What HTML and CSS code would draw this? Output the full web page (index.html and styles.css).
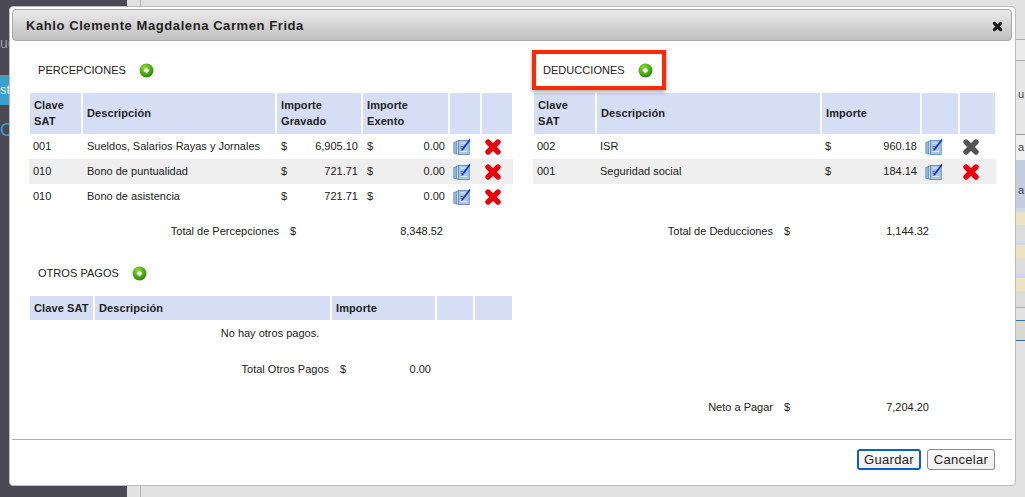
FILE: index.html
```html
<!DOCTYPE html>
<html lang="es">
<head>
<meta charset="utf-8">
<title>Nómina</title>
<link rel="stylesheet" href="styles.css">
</head>
<body>
<svg class="defs" width="0" height="0" aria-hidden="true">
  <defs>
    <radialGradient id="plusFill" cx="40%" cy="30%" r="75%">
      <stop offset="0" stop-color="#8fdc3a"/>
      <stop offset="0.6" stop-color="#4aa80f"/>
      <stop offset="1" stop-color="#2c7f08"/>
    </radialGradient>
    <symbol id="plus" viewBox="0 0 16 16">
      <circle cx="8" cy="8" r="7.4" fill="url(#plusFill)"/>
      <path d="M8 5.2v5.6M5.2 8h5.6" stroke="#fff" stroke-width="2"/>
    </symbol>
    <symbol id="edit" viewBox="0 0 18 18">
      <path d="M.8 4.5 4 3.6v12.6l-3.2-1z" fill="#9dbcdc" stroke="#5a8cc0" stroke-width=".8"/>
      <path d="M3.4 3.4 6.2 2.6v13.8l-2.8-.6z" fill="#c2d7ea" stroke="#5a8cc0" stroke-width=".8"/>
      <rect x="5.6" y="2.6" width="10.6" height="14" fill="#a9c5e0" stroke="#5a8cc0" stroke-width=".9"/>
      <path d="M7.4 5h6M7.4 13.5h7" stroke="#e6eff7" stroke-width="1"/>
      <path d="M8.4 11.2 16.4.9l1.3 1L9.8 12.4z" fill="#1330d8"/>
      <path d="M8.4 11.2 7.8 13l2-.6z" fill="#a8642c"/>
      <path d="M7.5 8.5h3M7.5 10.5h1.5" stroke="#54687e" stroke-width="1"/>
    </symbol>
    <symbol id="del" viewBox="0 0 18 18">
      <path d="M4 4 14 14M14 4 4 14" stroke="currentColor" stroke-width="5.4" stroke-linecap="round"/>
    </symbol>
  </defs>
</svg>

<div class="page">
  <aside class="sidebar">
    <div class="side-text">uc</div>
    <div class="side-button">st</div>
    <div class="side-link">Cc</div>
  </aside>
  <main class="backdrop">
    <div class="back-inner">
      <div class="strip">
        <div class="strip-row strip-top"></div>
        <div class="strip-row strip-head"></div>
        <div class="strip-row strip-text">u</div>
        <div class="strip-row strip-name">a</div>
        <div class="strip-row strip-blue">a</div>
        <div class="strip-row strip-thumb"></div>
        <div class="strip-row strip-thumb"></div>
        <div class="strip-row strip-thumb"></div>
        <div class="strip-row strip-foot"></div>
        <div class="strip-row strip-pager"></div>
      </div>
    </div>
  </main>
</div>

<section class="modal">
  <header class="titlebar">
    <h1 class="title">Kahlo Clemente Magdalena Carmen Frida</h1>
    <svg class="close"><use href="#del"/></svg>
  </header>

  <div class="modal-body">
    <div class="column">
      <h2 class="heading">PERCEPCIONES <svg class="plus"><use href="#plus"/></svg></h2>
      <table class="grid">
        <thead>
          <tr>
            <th class="p1">Clave SAT</th>
            <th class="p2">Descripción</th>
            <th class="p3">Importe Gravado</th>
            <th class="p4">Importe Exento</th>
            <th class="p5"></th>
            <th class="p6"></th>
          </tr>
        </thead>
        <tbody>
          <tr>
            <td>001</td>
            <td>Sueldos, Salarios Rayas y Jornales</td>
            <td><div class="money"><span>$</span><span>6,905.10</span></div></td>
            <td><div class="money"><span>$</span><span>0.00</span></div></td>
            <td class="icon"><svg class="edit"><use href="#edit"/></svg></td>
            <td class="icon"><svg class="del"><use href="#del"/></svg></td>
          </tr>
          <tr class="alt">
            <td>010</td>
            <td>Bono de puntualidad</td>
            <td><div class="money"><span>$</span><span>721.71</span></div></td>
            <td><div class="money"><span>$</span><span>0.00</span></div></td>
            <td class="icon"><svg class="edit"><use href="#edit"/></svg></td>
            <td class="icon"><svg class="del"><use href="#del"/></svg></td>
          </tr>
          <tr>
            <td>010</td>
            <td>Bono de asistencia</td>
            <td><div class="money"><span>$</span><span>721.71</span></div></td>
            <td><div class="money"><span>$</span><span>0.00</span></div></td>
            <td class="icon"><svg class="edit"><use href="#edit"/></svg></td>
            <td class="icon"><svg class="del"><use href="#del"/></svg></td>
          </tr>
        </tbody>
      </table>
      <div class="total total-per">
        <span class="total-label">Total de Percepciones</span>
        <span class="total-sign">$</span>
        <span class="total-amount">8,348.52</span>
      </div>

      <h2 class="heading heading-otros">OTROS PAGOS <svg class="plus"><use href="#plus"/></svg></h2>
      <table class="grid grid-otros">
        <thead>
          <tr>
            <th class="o1">Clave SAT</th>
            <th class="o2">Descripción</th>
            <th class="o3">Importe</th>
            <th class="o4"></th>
            <th class="o5"></th>
          </tr>
        </thead>
        <tbody>
          <tr>
            <td class="empty" colspan="5">No hay otros pagos.</td>
          </tr>
        </tbody>
      </table>
      <div class="total total-otros">
        <span class="total-label">Total Otros Pagos</span>
        <span class="total-sign">$</span>
        <span class="total-amount">0.00</span>
      </div>
    </div>

    <div class="column">
      <h2 class="heading heading-ded">DEDUCCIONES <svg class="plus"><use href="#plus"/></svg></h2>
      <table class="grid grid-ded">
        <thead>
          <tr>
            <th class="d1">Clave SAT</th>
            <th class="d2">Descripción</th>
            <th class="d3">Importe</th>
            <th class="d4"></th>
            <th class="d5"></th>
          </tr>
        </thead>
        <tbody>
          <tr>
            <td>002</td>
            <td>ISR</td>
            <td><div class="money"><span>$</span><span>960.18</span></div></td>
            <td class="icon"><svg class="edit"><use href="#edit"/></svg></td>
            <td class="icon"><svg class="del del-off"><use href="#del"/></svg></td>
          </tr>
          <tr class="alt">
            <td>001</td>
            <td>Seguridad social</td>
            <td><div class="money"><span>$</span><span>184.14</span></div></td>
            <td class="icon"><svg class="edit"><use href="#edit"/></svg></td>
            <td class="icon"><svg class="del"><use href="#del"/></svg></td>
          </tr>
        </tbody>
      </table>
      <div class="total total-ded">
        <span class="total-label">Total de Deducciones</span>
        <span class="total-sign">$</span>
        <span class="total-amount">1,144.32</span>
      </div>
      <div class="total total-neto">
        <span class="total-label">Neto a Pagar</span>
        <span class="total-sign">$</span>
        <span class="total-amount">7,204.20</span>
      </div>
    </div>
  </div>

  <footer class="modal-foot">
    <button class="btn btn-primary" type="button">Guardar</button>
    <button class="btn" type="button">Cancelar</button>
  </footer>

  <div class="callout"></div>
</section>
</body>
</html>
```

FILE: styles.css
```css
* { box-sizing: border-box; }

html, body {
  margin: 0;
  height: 497px;
  overflow: hidden;
}

body {
  position: relative;
  font-family: "Liberation Sans", Arial, sans-serif;
  font-size: 11px;
  color: #222;
  background: #e0e0e0;
}

.defs { position: absolute; }

/* Page behind the dialog */
.page {
  display: flex;
  height: 497px;
}

.sidebar {
  width: 127px;
  flex: none;
  background: #4a4954;
  padding-top: 35px;
  overflow: hidden;
}

.side-text {
  font-size: 14px;
  line-height: 16px;
  color: #9a9aa6;
}

.side-button {
  margin-top: 24px;
  height: 30px;
  width: 60px;
  background: #3a9fd0;
  color: #e8f4fa;
  font-size: 13px;
  line-height: 30px;
}

.side-link {
  margin-top: 14px;
  font-size: 18px;
  line-height: 22px;
  color: #3a9fd0;
}

.backdrop {
  flex: 1;
  min-width: 0;
  background: #e2e2e2;
  padding-left: 13px;
}

.back-inner {
  height: 100%;
  border-left: 1px solid #b4b4b4;
  display: flex;
  justify-content: flex-end;
}

.strip {
  width: 9px;
  overflow: hidden;
  font-size: 11px;
  color: #444;
}

.strip-row {
  white-space: nowrap;
  overflow: hidden;
  padding-left: 2px;
}

.strip-top { height: 39px; }
.strip-head { height: 22px; border-top: 1px solid #aaa; border-bottom: 1px solid #aaa; background: #ececec; }
.strip-text { height: 74px; line-height: 66px; background: #e6e6e6; border-bottom: 1px solid #999; }
.strip-name { height: 25px; line-height: 24px; background: #f0f0f0; }
.strip-blue { height: 48px; line-height: 60px; background: #c5cde0; }
.strip-thumb {
  height: 33px;
  background: linear-gradient(#cdd8ea 0 4px, #ece3bf 4px 17px, #dcdcdc 17px);
}
.strip-foot { height: 13px; background: #e2e2e2; border-top: 1px solid #aaa; }
.strip-pager { height: 21px; background: #d8d8d0; border-top: 1px solid #3a6ea5; border-bottom: 1px solid #3a6ea5; }

/* Dialog */
.modal {
  position: absolute;
  left: 9px;
  top: 6px;
  width: 1007px;
  height: 480px;
  padding: 3px 3px 3px 2px;
  display: flex;
  flex-direction: column;
  background: #fff;
  border: 1px solid #bbb;
  border-radius: 4px;
}

.titlebar {
  flex: none;
  height: 32px;
  margin-top: -1px;
  display: flex;
  align-items: center;
  justify-content: space-between;
  padding: 0 8px 0 13px;
  background: linear-gradient(#ebebeb, #bfbfbf);
  border: 1px solid #a8a8a8;
  border-radius: 4px;
}

.title {
  margin: 0;
  font-size: 13px;
  font-weight: bold;
  letter-spacing: .58px;
  color: #222;
}

.close {
  display: block;
  width: 11px;
  height: 11px;
  margin-top: 3px;
  color: #1a1a1a;
}

.modal-body {
  flex: 1;
  min-height: 0;
  display: grid;
  grid-template-columns: 484px 463px;
  column-gap: 20px;
  padding-left: 17px;
}

.heading {
  display: flex;
  align-items: center;
  height: 24px;
  margin: 17px 0 10px;
  padding-left: 9px;
  font-size: 11px;
  font-weight: normal;
  letter-spacing: .04px;
  color: #222;
  white-space: pre;
}

.heading-otros { margin: 22px 0 10px; }
.heading-ded { padding-left: 10px; }

.plus {
  width: 15px;
  height: 15px;
  margin-left: 10px;
}

/* Tables */
.grid {
  width: 484px;
  table-layout: fixed;
  border-collapse: separate;
  border-spacing: 0;
}

.grid-ded { width: 463px; }

.grid th {
  height: 42px;
  padding: 0 3px 2px 4px;
  border: 1px solid #fff;
  border-bottom-width: 0;
  background: #d5def5;
  background-clip: padding-box;
  font-size: 11px;
  line-height: 16px;
  letter-spacing: .1px;
  font-weight: bold;
  text-align: left;
  vertical-align: middle;
}

.grid-otros th {
  height: 25px;
  padding-bottom: 0;
  white-space: nowrap;
}

.grid td {
  height: 25px;
  padding: 0 5px 2px;
  line-height: 14px;
  white-space: nowrap;
  vertical-align: middle;
}

.grid td:first-child { padding-left: 4px; }
.grid-ded td { padding-left: 4px; }
.grid .alt td { background: #efefef; }
.grid td.icon { padding: 0; text-align: left; }
.grid td.empty { text-align: center; height: 26px; padding: 0 2px 0 0; }

.p1 { width: 53px; }
.p2 { width: 194px; }
.p3 { width: 86px; }
.p4 { width: 87px; }
.p5 { width: 32px; }
.p6 { width: 32px; }

.o1 { width: 65px; }
.o2 { width: 237px; }
.o3 { width: 105px; }
.o4 { width: 38px; }
.o5 { width: 39px; }

.d1 { width: 63px; }
.d2 { width: 225px; }
.d3 { width: 100px; }
.d4 { width: 38px; }
.d5 { width: 37px; }

.money {
  display: flex;
  justify-content: space-between;
}

.money span:last-child { margin-right: -1px; }

.edit {
  display: block;
  width: 18px;
  height: 18px;
  margin-left: 4px;
}

.del {
  display: block;
  width: 18px;
  height: 18px;
  margin-left: 3px;
  color: #e8000c;
}

.del-off { color: #555; }

/* Totals */
.total {
  display: flex;
  height: 16px;
  line-height: 16px;
}

.total-label { text-align: right; white-space: nowrap; }
.total-sign { margin-left: 11px; width: 8px; flex: none; }
.total-amount { text-align: right; flex: none; }

.total-per { margin-top: 14px; }
.total-per .total-label { width: 250px; }
.total-per .total-amount { width: 145px; }

.total-otros { margin-top: 15px; }
.total-otros .total-label { width: 300px; }
.total-otros .total-amount { width: 83px; }

.total-ded { margin-top: 39px; }
.total-ded .total-label { width: 240px; }
.total-ded .total-amount { width: 137px; }

.total-neto { margin-top: 160px; }
.total-neto .total-label { width: 240px; }
.total-neto .total-amount { width: 137px; }

/* Footer */
.modal-foot {
  flex: none;
  height: 43px;
  border-top: 1px solid #b0b0b0;
  display: flex;
  justify-content: flex-end;
  align-items: flex-start;
  gap: 6px;
  padding: 9px 17px 0 0;
}

.btn {
  height: 21px;
  width: 68px;
  padding: 0;
  font-family: inherit;
  font-size: 13px;
  letter-spacing: .3px;
  color: #222;
  background: linear-gradient(#fafafa, #efefef);
  border: 1px solid #8a8a8a;
  border-radius: 3px;
}

.btn-primary {
  width: 64px;
  border: 2px solid #0a62b8;
}

/* Red annotation over the Deducciones heading */
.callout {
  position: absolute;
  left: 522px;
  top: 43px;
  width: 134px;
  height: 40px;
  border: 4px solid #ff2a00;
  box-shadow: 0 2px 4px rgba(0, 0, 0, .35), inset 0 0 2px rgba(0, 0, 0, .1);
}
```
